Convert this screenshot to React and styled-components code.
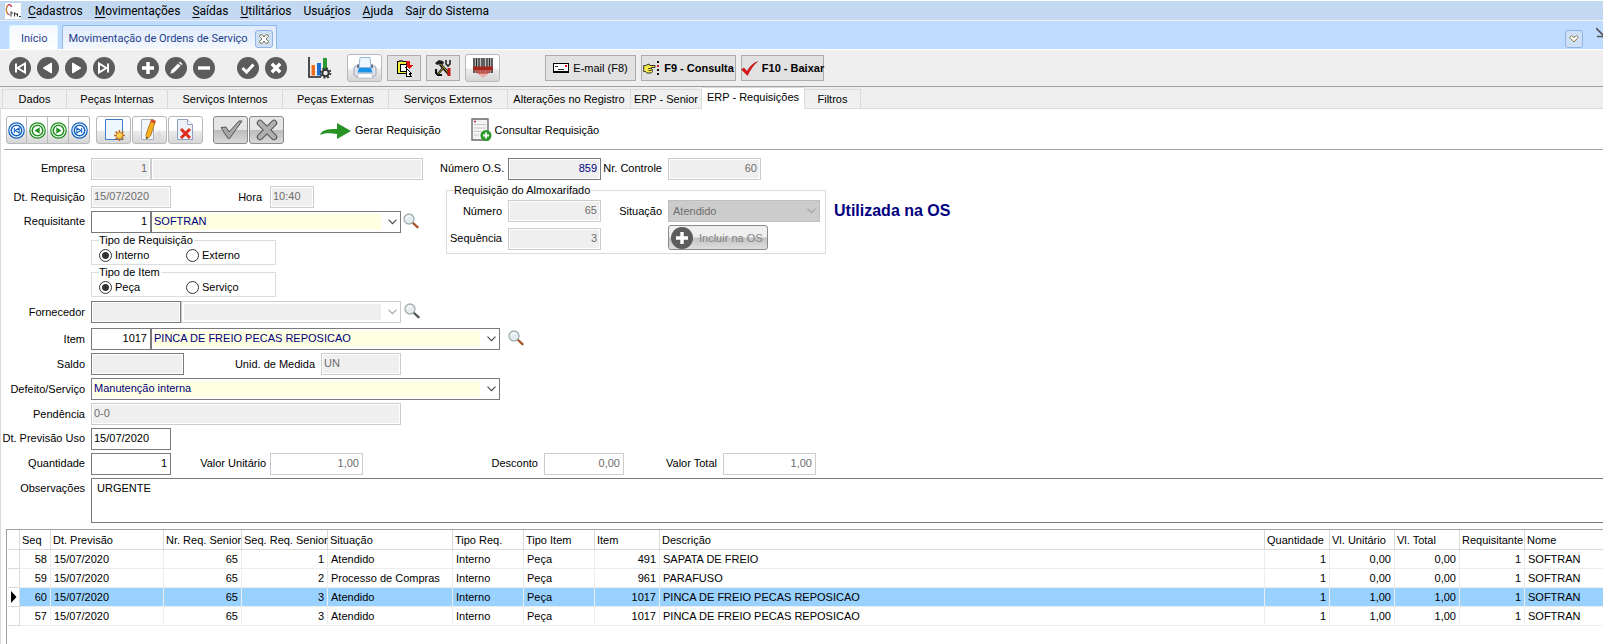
import React, { useState } from 'react';
import styled, { createGlobalStyle, css } from 'styled-components';

const GlobalStyle = createGlobalStyle`
    *, *::before, *::after { box-sizing: border-box; }
    html, body, #root { height: 100%; }
    body {
        margin: 0;
        background: #fff;
        color: #000;
        font: 11px/12px "Liberation Sans", Arial, sans-serif;
    }
    button, input, select, textarea { font: inherit; margin: 0; border-radius: 0; }
    svg { display: block; flex: none; }
`

/* ---------- layout ---------- */
const Page = styled.div`
    min-height: 100%;
    display: flex;
    flex-direction: column;
    overflow: hidden;
`
const MenuBar = styled.nav`
    height: 21px;
    display: flex;
    align-items: center;
    gap: 12px;
    padding-left: 5px;
    background: #c3d9f1;
    border-top: 1px solid #fff;
    border-bottom: 1px solid #efefef;
    font: 12px/18px Roboto, "Open Sans", sans-serif;
`
const MenuLink = styled.a`
    color: #000;
    text-decoration: none;
    white-space: nowrap;
    &:first-of-type { margin-left: -5px; }
    u { text-underline-offset: 2px; }
`
const WindowTabs = styled.div`
    height: 29px;
    display: flex;
    align-items: flex-end;
    gap: 4px;
    padding-left: 9px;
    background: #bfdbff;
    border-bottom: 1px solid #fff;
    font: 11px/16px Roboto, "Noto Sans", sans-serif;
`
const WindowTab = styled.button`
    height: 24px;
    display: flex;
    align-items: center;
    gap: 7px;
    padding: ${props => props.$closable ? '2px 3px 0 6px' : '2px 9px 0 11px'};
    border: 1px solid ${props => props.$closable ? '#8db9ee' : '#d5f7ff'};
    border-bottom: 0;
    border-radius: 2px 2px 0 0;
    background: ${props => props.$closable ? 'linear-gradient(#dfeafb, #f4f8fe)' : 'linear-gradient(#f4f9ff, #fff)'};
    color: #1f3f8c;
    white-space: nowrap;
`
const SmallBox = styled.span`
    width: 18px;
    height: 18px;
    display: grid;
    place-items: center;
    border: 1px solid #8fb4e3;
    border-radius: 3px;
    background: #cfe0f6;
`
const ChevronButton = styled.button`
    width: 18px;
    height: 18px;
    display: grid;
    place-items: center;
    padding: 0;
    margin: 0 9px 1px auto;
    border: 1px solid #8fb4e3;
    border-radius: 3px;
    background: #cfe0f6;
`
const Corner = styled.span`
    width: 7px;
    height: 22px;
    overflow: hidden;
`
const Toolbar = styled.div`
    height: 37px;
    display: flex;
    align-items: center;
    padding: 0 9px;
    background: #efefef;
    border-bottom: 1px solid #a0a0a0;
`
const Group = styled.div`
    display: flex;
    align-items: center;
    gap: ${props => props.$gap || 0}px;
    margin-left: ${props => props.$left || 0}px;
`
const RoundButton = styled.button`
    width: 22px;
    height: 22px;
    padding: 0;
    border: 0;
    background: none;
`
const GlossButton = styled.button`
    width: ${props => props.$wide ? 35 : 21}px;
    height: 28px;
    display: grid;
    place-items: center;
    padding: 0;
    border: 1px solid ${props => props.$dark ? '#8a8a8a' : '#b9b9b9'};
    border-radius: 3px;
    background: ${props => props.$dark
        ? 'linear-gradient(#e6e6e6 0 48%, #bdbdbd 52%, #d8d8d8)'
        : 'linear-gradient(#fff 0 50%, #ececec 55%, #d6d6d6)'};
`
const NavStrip = styled.div`
    display: flex;
    ${GlossButton} { border-radius: 0; }
    ${GlossButton} + ${GlossButton} { border-left: 0; }
    ${GlossButton}:first-child { border-radius: 3px 0 0 3px; }
    ${GlossButton}:last-child { border-radius: 0 3px 3px 0; }
`
const FlatButton = styled.button`
    height: 26px;
    display: flex;
    align-items: center;
    justify-content: center;
    gap: 4px;
    width: ${props => props.$width}px;
    padding: 0;
    border: 1px solid #adadad;
    background: #e1e1e1;
    color: #000;
    white-space: nowrap;
    ${props => props.$bold && css`font-weight: bold;`}
`
const TabStrip = styled.div`
    height: 22px;
    display: flex;
    align-items: flex-end;
    padding-left: 2px;
    background: #efefef;
    box-shadow: inset 0 -1px #dadada;
`
const PageTab = styled.button`
    width: ${props => props.$width}px;
    height: 20px;
    padding: 0;
    border: 1px solid #dadada;
    border-left-width: ${props => props.$first ? 1 : 0}px;
    background: #f0f0f0;
    color: #000;
    white-space: nowrap;
    ${props => props.$active && css`
        height: 22px;
        padding-bottom: 2px;
        border-bottom-color: #fff;
        background: #fff;
    `}
`
const Content = styled.main`
    flex: 1;
    display: flex;
    flex-direction: column;
    border-left: 1px solid #dadada;
`
const RecordBar = styled.div`
    height: 41px;
    display: flex;
    align-items: center;
    margin-left: 3px;
    padding: 2px 2px 0;
    border-bottom: 1px solid #a0a0a0;
`
const LinkButton = styled.button`
    display: flex;
    align-items: center;
    gap: 3px;
    margin-left: ${props => props.$left}px;
    padding: 0;
    border: 0;
    background: none;
    color: #000;
    white-space: nowrap;
`

/* ---------- form ---------- */
const Form = styled.form`
    padding-top: 8px;
`
const Columns = styled.div`
    display: flex;
    align-items: flex-start;
`
const LeftColumn = styled.div`
    width: 422px;
    flex: none;
`
const RightColumn = styled.div`
    flex: none;
    margin-left: 17px;
`
const Row = styled.div`
    display: flex;
    align-items: center;
    margin-top: ${props => props.$top || 0}px;
`
const Label = styled.label`
    flex: none;
    width: ${props => props.$width || 84}px;
    margin-right: ${props => props.$right || 6}px;
    text-align: right;
    white-space: nowrap;
    ${props => props.$raise && css`align-self: flex-start; padding-top: 4px;`}
`
const fieldFrame = css`
    height: 22px;
    border: 1px solid ${props => props.$soft ? '#cccccc' : '#7a7a7a'};
    color: ${props => props.$soft ? '#6d6d6d' : props.$navy ? '#000080' : '#000'};
    opacity: 1;
    outline: 0;
`
const Field = styled.input`
    ${fieldFrame}
    flex: none;
    width: ${props => props.$width}px;
    padding: 0 ${props => props.$right ? 3 : 2}px 2px 2px;
    text-align: ${props => props.$right ? 'right' : 'left'};
    background: ${props => props.$white ? '#fff' : '#efefef'};
    box-shadow: inset 0 0 0 1px #fff;
`
const ComboBox = styled.div`
    flex: none;
    display: grid;
    align-items: center;
    width: ${props => props.$width}px;
    > * { grid-area: 1 / 1; }
    svg {
        justify-self: end;
        margin-right: 4px;
        pointer-events: none;
    }
`
const Select = styled.select`
    ${fieldFrame}
    width: 100%;
    appearance: none;
    padding: 0 20px 2px 2px;
    background: ${props => props.$solid
        ? '#cccccc'
        : css`linear-gradient(${props.$soft ? '#efefef' : '#ffffe1'} 0 100%) 2px 2px / calc(100% - 21px) 16px no-repeat #fff`};
    ${props => props.$solid && css`border-color: #bfbfbf; padding: 0 20px 0 4px;`}
`
const LookupButton = styled.button`
    padding: 0 0 2px;
    margin-left: ${props => props.$left}px;
    border: 0;
    background: none;
`
const RadioBox = styled.fieldset`
    display: flex;
    width: 185px;
    height: 31px;
    min-width: 0;
    margin: 1px 0 0 90px;
    padding: 0 0 0 7px;
    border: 1px solid #dcdcdc;
`
const Legend = styled.legend`
    padding: 0 1px 0 0;
    line-height: 12px;
`
const RadioLabel = styled.label`
    width: 87px;
    height: 18px;
    display: flex;
    align-items: center;
    gap: 3px;
`
const Radio = styled.input`
    appearance: none;
    flex: none;
    width: 13px;
    height: 13px;
    border: 1px solid #333;
    border-radius: 50%;
    background: #fff;
    &:checked { background: radial-gradient(circle, #333 0 3px, #fff 4px); }
`
const StockBox = styled.fieldset`
    display: grid;
    grid-template-columns: 55px 93px 55px 152px;
    align-items: end;
    gap: 3px 6px;
    width: 380px;
    margin: 4px 0 0 6px;
    padding: 4px 0 3px;
    border: 1px solid #dcdcdc;
    legend { margin-left: 7px; }
    ${Label} { width: auto; margin: 0; align-self: center; }
`
const IncludeButton = styled.button`
    width: 100px;
    height: 25px;
    display: flex;
    align-items: center;
    gap: 6px;
    padding: 0 2px;
    border: 1px solid #8a8a8a;
    border-radius: 3px;
    background: linear-gradient(#efefef 0 48%, #c2c2c2 52%, #dedede);
    color: #838383;
    white-space: nowrap;
`
const Status = styled.strong`
    margin-left: 8px;
    padding-top: 44px;
    color: #000080;
    font-size: 16px;
    line-height: 18px;
    white-space: nowrap;
`
const Notes = styled.textarea`
    flex: 1;
    display: block;
    height: 45px;
    padding: 3px 5px;
    border: 1px solid #7a7a7a;
    border-right: 0;
    resize: none;
    outline: 0;
`

/* ---------- grid ---------- */
const GridFrame = styled.div`
    flex: 1;
    margin: 6px 0 0 5px;
    padding-left: 1px;
    border: solid #a0a0a0;
    border-width: 1px 0 0 1px;
`
const Grid = styled.table`
    width: 100%;
    table-layout: fixed;
    border-collapse: separate;
    border-spacing: 0;
`
const HeadCell = styled.th`
    height: 20px;
    padding: 0 0 0 2px;
    border-right: 1px solid #dadada;
    border-bottom: 1px solid #dadada;
    font-weight: normal;
    text-align: left;
    white-space: nowrap;
    &:last-child { border-right: 0; }
`
const Cell = styled.td`
    height: 19px;
    padding: 0 3px;
    border-right: 1px solid #ededed;
    border-bottom: 1px solid #ededed;
    text-align: ${props => props.$right ? 'right' : 'left'};
    white-space: nowrap;
    ${props => props.$selected && css`background: #99d1ff;`}
    &:last-child { border-right: 0; }
`
const Marker = styled.td`
    padding: 0 0 0 2px;
    border-right: 1px solid #dadada;
    border-bottom: 1px solid #dadada;
`

/* ---------- icons ---------- */
const shapes = {
    first: <path d="M7 6.5v9M16 6.5v9L8.6 11z" strokeWidth="2" fill="none" />,
    prev: <path d="M14.5 6v10L6.2 11z" strokeWidth="1" />,
    next: <path d="M7.5 6v10L15.8 11z" strokeWidth="1" />,
    last: <path d="M15 6.5v9M6 6.5v9L13.4 11z" strokeWidth="2" fill="none" />,
    plus: <path d="M11 5v12M5 11h12" strokeWidth="3.4" />,
    edit: <path d="M5.6 16.4l.9-3.1 6.5-6.6 2.4 2.4-6.6 6.5zM14 5.7l1-1 2.4 2.4-1 1z" strokeWidth=".3" />,
    minus: <path d="M5 11h12" strokeWidth="3.4" />,
    check: <path d="M5.5 11l4 4 7-7.6" strokeWidth="3" fill="none" />,
    cross: <path d="M6.8 6.8l8.4 8.4M15.2 6.8l-8.4 8.4" strokeWidth="3.4" />,
}

const DiscIcon = ({ name }) => (
    <svg width="22" height="22" viewBox="0 0 22 22">
        <circle cx="11" cy="11" r="11" fill="#5c5c5c" />
        <g fill="#fff" stroke="#fff">{shapes[name]}</g>
    </svg>
)

const OrbIcon = ({ name, color }) => (
    <svg width="17" height="17" viewBox="0 0 22 22">
        <circle cx="11" cy="11" r="10" fill="#fff" stroke={color} strokeWidth="1.6" />
        <circle cx="11" cy="11" r="6.800" fill="#fff" stroke={color} strokeWidth="2" />
        <g transform="translate(3.300 3.300) scale(.7)" fill={color} stroke={color}>{shapes[name]}</g>
    </svg>
)

const LogoIcon = () => (
    <svg width="16" height="16" viewBox="0 0 16 16">
        <path d="M0 0h16v16H0z" fill="#fff" />
        <path d="M6.500 4C5.800 1 3.200.9 2 3.500.500 7 1.500 11 4.500 12" fill="none" stroke="#b01c50" strokeWidth="1.200" />
        <path d="M3 1.800C.6 5 .6 9.500 3.300 12" fill="none" stroke="#d8c420" strokeWidth=".8" />
        <path d="M6 8.500v5M6 9l2 1.500M9.500 13.500V9.500l1.500 2 1.500-1v3M14 13.500h2" fill="none" stroke="#333" strokeWidth="1" />
    </svg>
)

const CloseIcon = () => (
    <svg width="12" height="12" viewBox="0 0 12 12">
        <path d="M2 2l2-.5 2 2.500 2-2.500 2 .5.500 1.500L8 6l2.500 2.500L10 10l-2 .5L6 8l-2 2.500-2-.5-.5-1.500L4 6 1.500 3.500z" fill="#fff" stroke="#6d6b4b" strokeWidth=".9" />
    </svg>
)

const MoreIcon = () => (
    <svg width="10" height="8" viewBox="0 0 10 8">
        <path d="M.8 2.300L2.500.700 5 2.500 7.500.700l1.700 1.600L5 7z" fill="#fff" stroke="#7d6a2f" strokeWidth=".9" />
    </svg>
)

const CornerIcon = () => (
    <svg width="14" height="14" viewBox="0 0 14 14">
        <path d="M0 1l8 8M8 2v7.500H1" fill="none" stroke="#555" strokeWidth="1.600" />
    </svg>
)

const ChartIcon = () => (
    <svg width="24" height="22" viewBox="0 0 24 22">
        <path d="M1 0v20h12" fill="none" stroke="#222" strokeWidth="1.600" />
        <path d="M3.500 8h3.500v10.500H3.500z" fill="#f26a1b" />
        <path d="M9 6h4v12.500H9z" fill="#1d6fd0" />
        <path d="M15 1h4v12h-4z" fill="#2d9a35" />
        <circle cx="17.500" cy="16" r="3.200" fill="#efefef" stroke="#333" strokeWidth="2" />
        <circle cx="17.500" cy="16" r="4.900" fill="none" stroke="#333" strokeWidth="1.800" strokeDasharray="1.900 1.950" />
    </svg>
)

const PrinterIcon = () => (
    <svg width="24" height="24" viewBox="0 0 24 24">
        <path d="M1 11l4-2h14l4 2v8l-3 2H4l-3-2z" fill="#dfe2ea" stroke="#8c93a8" strokeWidth=".8" />
        <path d="M7 1.500h10l1 10H6z" fill="#eef7ff" stroke="#7fa5cf" strokeWidth=".8" />
        <path d="M5 12V8.500M19 12V8.500" stroke="#4a5a78" strokeWidth="1.500" />
        <path d="M6 12h12l1.500 4.500h-15z" fill="#1992e8" />
        <path d="M5.500 17.500h13L20 22H4z" fill="#fff" stroke="#9aa3b5" strokeWidth=".6" />
    </svg>
)

const ExitIcon = () => (
    <svg width="17" height="18" viewBox="0 0 17 18" shapeRendering="crispEdges">
        <path d="M1 2h9v12H1z" fill="#f4ef3c" stroke="#000" />
        <path d="M4 5h6v7H4z" fill="#fff" stroke="#000" />
        <path d="M3 1h4v2H3z" fill="#555" />
        <path d="M10 2h4v4h3l-4 4-4-4h2V4h-1z" fill="#e81010" />
        <path d="M9 8l6 6h-2l2 3h-5V8z" fill="#fff" stroke="#000" />
    </svg>
)

const ToolsIcon = () => (
    <svg width="17" height="18" viewBox="0 0 17 18">
        <path d="M0 4l4-3 4 1 1 2-2 2-2-1-3 1z" fill="#222" />
        <path d="M5 5l9 10" stroke="#111" strokeWidth="3" />
        <path d="M5.500 5l8 9" stroke="#c9b82e" strokeWidth="1" />
        <path d="M11 1v4l2 2 2-2V1" fill="none" stroke="#222" strokeWidth="1.600" />
        <path d="M14 9v8" stroke="#c21919" strokeWidth="3" />
        <path d="M8 9l-5 6M1 10v4l2 2h4" stroke="#111" strokeWidth="2.200" fill="none" />
        <path d="M8 9l-5 6" stroke="#d7c536" strokeWidth=".8" />
    </svg>
)

const ScannerIcon = () => (
    <svg width="22" height="22" viewBox="0 0 22 22">
        <path d="M3 13h16l-4 5-4 3-4-3z" fill="#e8b0aa" />
        <path d="M1 1h20v15H1z" fill="#999" opacity=".6" />
        <path d="M2 1v15M4.500 1v15M7 1v15M10 1v15M12 1v15M15 1v15M17.500 1v15M20 1v15" stroke="#2a2a2a" strokeWidth="1.300" />
        <path d="M1 9.500h20V13H1z" fill="#a3251c" />
        <path d="M2 13h18l-4 4H6z" fill="#cf5a50" opacity=".8" />
    </svg>
)

const MailIcon = () => (
    <svg width="16" height="10" viewBox="0 0 16 10" shapeRendering="crispEdges">
        <path d="M.5.500h15v8H.500z" fill="#fff" stroke="#000" />
        <path d="M0 9.500h16" stroke="#000" />
        <path d="M12 2h2v2h-2z" fill="#e81010" />
        <path d="M2 3.500h3M5 6.500h6" stroke="#333" />
    </svg>
)

const HandIcon = () => (
    <svg width="17" height="16" viewBox="0 0 17 16">
        <path d="M.7 5.500h2L6 4l1 1.500h5v2H8.500v1.500l1 .5-.5 1.500.5.500-.7 1L8 13H4l-1.500-1.500H.7z" fill="#f4ea4a" stroke="#222" strokeWidth=".9" />
        <path d="M5 8.500h3.500M5.500 10.500h3" stroke="#222" strokeWidth=".8" />
        <path d="M15 1v15" stroke="#111" strokeWidth="2" strokeDasharray="2 2" />
        <path d="M15 5v2" stroke="#c21919" strokeWidth="2" />
    </svg>
)

const RedCheckIcon = () => (
    <svg width="17" height="15" viewBox="0 0 17 15">
        <path d="M.5 8.500L3 7l3 3.500C8.500 6 11.500 2.500 16.500.500 12 4.500 9 9 6.500 14.500z" fill="#e01414" stroke="#a00" strokeWidth=".5" />
    </svg>
)

const Sheet = ({ children }) => (
    <svg width="24" height="24" viewBox="0 0 24 24">{children}</svg>
)

const NewIcon = () => (
    <Sheet>
        <path d="M3.500 1.500h17v20h-17z" fill="#eef6ff" stroke="#3d7cc4" />
        <path d="M17.500 12v11M12 17.500h11M13.600 13.600l7.800 7.800M21.400 13.600l-7.800 7.800" stroke="#b96a12" strokeWidth="1.600" />
        <circle cx="17.500" cy="17.500" r="3" fill="#ffd257" stroke="#d98d20" />
    </Sheet>
)

const EditSheetIcon = () => (
    <Sheet>
        <path d="M15 21l6-9 3 7-4 3z" fill="#dcdcdc" />
        <path d="M3.500 1.500h12v20h-12z" fill="#f2f5fa" stroke="#a9b3c4" />
        <path d="M13.500 1.500l4 1.500-5 15-4 3-.5-4.500z" fill="#f6b21c" stroke="#a8690f" strokeWidth=".8" />
        <path d="M13.500 1.500l4 1.500-.8 2.500-4-1.500z" fill="#d2493a" />
        <path d="M8.500 21l-.2-2 1.700.8z" fill="#222" />
    </Sheet>
)

const DeleteIcon = () => (
    <Sheet>
        <path d="M3.500 1.500h10l5 5v15h-15z" fill="#eef1f7" stroke="#8ea0bd" />
        <path d="M13.500 1.500v5h5" fill="#fff" stroke="#8ea0bd" />
        <path d="M7 11l9 9M16 11l-9 9" stroke="#e02a1c" strokeWidth="3" />
    </Sheet>
)

const GrayCheckIcon = () => (
    <Sheet>
        <path d="M2 9.500l5-.5 3 5L20 3h3L10.500 20.500H9z" fill="#a8a8a8" stroke="#555" />
    </Sheet>
)

const GrayCrossIcon = () => (
    <Sheet>
        <path d="M5 5l14 14M19 5L5 19" stroke="#555" strokeWidth="6.500" strokeLinecap="round" />
        <path d="M5 5l14 14M19 5L5 19" stroke="#b0b0b0" strokeWidth="4.500" strokeLinecap="round" />
    </Sheet>
)

const ArrowIcon = () => (
    <svg width="32" height="18" viewBox="0 0 32 18">
        <path d="M0 14C2 9 6 8 17 8V2l14 8-14 8v-5C9 12 4 12 0 14z" fill="#2a9325" />
    </svg>
)

const RequestIcon = () => (
    <svg width="21" height="24" viewBox="0 0 21 24">
        <path d="M1 1h16v21H1z" fill="#f3f3f3" stroke="#6b6b6b" strokeWidth="1.400" />
        <path d="M3 3.500h2" stroke="#b03050" strokeWidth="1.500" />
        <path d="M3 6.500h12M3 10h12M3 13.500h7M3 17h5" stroke="#c8c8c8" />
        <circle cx="15" cy="17.500" r="5.500" fill="#2f9a2b" />
        <path d="M15 14.500v6M12 17.500h6" stroke="#fff" strokeWidth="1.800" />
    </svg>
)

const LensIcon = ({ muted }) => (
    <svg width="16" height="16" viewBox="0 0 16 16">
        <path d="M9.500 9.500l5 4.700" stroke={muted ? '#555' : '#a8562a'} strokeWidth="2.400" strokeLinecap="round" />
        <circle cx="6" cy="6" r="5" fill={muted ? '#ebebeb' : '#e3ecef'} stroke="#a3afb3" strokeWidth="1.300" />
        <path d="M3 5.500C3.500 3.500 5.500 2.700 7.500 3.500" fill="none" stroke="#fff" strokeWidth="1.200" />
    </svg>
)

const DownIcon = ({ muted }) => (
    <svg width="9" height="6" viewBox="0 0 9 6">
        <path d="M.5.700l4 4 4-4" fill="none" stroke={muted ? '#a3a3a3' : '#444'} strokeWidth="1.100" />
    </svg>
)

const PointerIcon = () => (
    <svg width="7" height="12" viewBox="0 0 7 12">
        <path d="M1 0l5.500 6L1 12z" fill="#000" />
    </svg>
)

/* ---------- data ---------- */
const menu = [
    ['', 'C', 'adastros'],
    ['', 'M', 'ovimentações'],
    ['', 'S', 'aídas'],
    ['', 'U', 'tilitários'],
    ['Usuá', 'r', 'ios'],
    ['', 'A', 'juda'],
    ['Sa', 'i', 'r do Sistema'],
]

const pageTabs = [
    ['Dados', 65],
    ['Peças Internas', 101],
    ['Serviços Internos', 115],
    ['Peças Externas', 106],
    ['Serviços Externos', 119],
    ['Alterações no Registro', 123],
    ['ERP - Senior', 71],
    ['ERP - Requisições', 103],
    ['Filtros', 56],
]

const columns = [
    { title: 'Seq', width: 31, right: true },
    { title: 'Dt. Previsão', width: 113 },
    { title: 'Nr. Req. Senior', width: 78, right: true },
    { title: 'Seq. Req. Senior', width: 86, right: true },
    { title: 'Situação', width: 125 },
    { title: 'Tipo Req.', width: 71 },
    { title: 'Tipo Item', width: 71 },
    { title: 'Item', width: 65, right: true },
    { title: 'Descrição' },
    { title: 'Quantidade', width: 65, right: true },
    { title: 'Vl. Unitário', width: 65, right: true },
    { title: 'Vl. Total', width: 65, right: true },
    { title: 'Requisitante', width: 65, right: true },
    { title: 'Nome', width: 78 },
]

const rows = [
    ['58', '15/07/2020', '65', '1', 'Atendido', 'Interno', 'Peça', '491', 'SAPATA DE FREIO', '1', '0,00', '0,00', '1', 'SOFTRAN'],
    ['59', '15/07/2020', '65', '2', 'Processo de Compras', 'Interno', 'Peça', '961', 'PARAFUSO', '1', '0,00', '0,00', '1', 'SOFTRAN'],
    ['60', '15/07/2020', '65', '3', 'Atendido', 'Interno', 'Peça', '1017', 'PINCA DE FREIO PECAS REPOSICAO', '1', '1,00', '1,00', '1', 'SOFTRAN'],
    ['57', '15/07/2020', '65', '3', 'Atendido', 'Interno', 'Peça', '1017', 'PINCA DE FREIO PECAS REPOSICAO', '1', '1,00', '1,00', '1', 'SOFTRAN'],
]

/* ---------- parts ---------- */
function Combo({ id, label, width, value, soft, solid }) {
    return (
        <ComboBox $width={width}>
            <Select id={id} aria-label={label} $soft={soft} $solid={solid} $navy disabled={soft}>
                <option>{value}</option>
            </Select>
            <DownIcon muted={soft} />
        </ComboBox>
    )
}

function RadioGroup({ name, title, options }) {
    const [value, setValue] = useState(options[0])
    return (
        <RadioBox>
            <Legend>{title}</Legend>
            {options.map(option => (
                <RadioLabel key={option}>
                    <Radio type="radio" name={name} checked={value === option} onChange={() => setValue(option)} />
                    {option}
                </RadioLabel>
            ))}
        </RadioBox>
    )
}

function RequestForm() {
    return (
        <Form onSubmit={e => e.preventDefault()}>
            <Columns>
                <LeftColumn>
                    <Row>
                        <Label htmlFor="empresa" $raise>Empresa</Label>
                        <Field id="empresa" $width={60} $soft $right disabled defaultValue="1" />
                        <Field aria-label="Nome da empresa" $width={272} $soft disabled />
                    </Row>
                    <Row $top={6}>
                        <Label htmlFor="data">Dt. Requisição</Label>
                        <Field id="data" $width={80} $soft disabled defaultValue="15/07/2020" />
                        <Label htmlFor="hora" $width={91} $right={8}>Hora</Label>
                        <Field id="hora" $width={44} $soft disabled defaultValue="10:40" />
                    </Row>
                    <Row $top={3}>
                        <Label htmlFor="requisitante" $raise>Requisitante</Label>
                        <Field id="requisitante" $width={60} $white $right defaultValue="1" />
                        <Combo label="Nome do requisitante" width={250} value="SOFTRAN" />
                        <LookupButton type="button" aria-label="Pesquisar requisitante" $left={2}><LensIcon /></LookupButton>
                    </Row>
                    <RadioGroup name="tipoRequisicao" title="Tipo de Requisição" options={['Interno', 'Externo']} />
                    <RadioGroup name="tipoItem" title="Tipo de Item" options={['Peça', 'Serviço']} />
                </LeftColumn>
                <RightColumn>
                    <Row>
                        <Label htmlFor="os" $width={62} $raise>Número O.S.</Label>
                        <Field id="os" $width={93} $navy $right readOnly defaultValue="859" />
                        <Label htmlFor="controle" $width={61} $raise>Nr. Controle</Label>
                        <Field id="controle" $width={93} $soft $right disabled defaultValue="60" />
                    </Row>
                    <StockBox>
                        <Legend>Requisição do Almoxarifado</Legend>
                        <Label htmlFor="numero">Número</Label>
                        <Field id="numero" $width={93} $soft $right disabled defaultValue="65" />
                        <Label htmlFor="situacao">Situação</Label>
                        <Combo id="situacao" width={152} value="Atendido" soft solid />
                        <Label htmlFor="sequencia">Sequência</Label>
                        <Field id="sequencia" $width={93} $soft $right disabled defaultValue="3" />
                        <span />
                        <IncludeButton type="button" disabled><DiscIcon name="plus" />Incluir na OS</IncludeButton>
                    </StockBox>
                </RightColumn>
                <Status>Utilizada na OS</Status>
            </Columns>
            <Row $top={4}>
                <Label htmlFor="fornecedor">Fornecedor</Label>
                <Field id="fornecedor" $width={90} readOnly />
                <Combo label="Nome do fornecedor" width={220} value="" soft />
                <LookupButton type="button" aria-label="Pesquisar fornecedor" $left={3}><LensIcon muted /></LookupButton>
            </Row>
            <Row $top={5}>
                <Label htmlFor="item">Item</Label>
                <Field id="item" $width={60} $white $right defaultValue="1017" />
                <Combo label="Descrição do item" width={349} value="PINCA DE FREIO PECAS REPOSICAO" />
                <LookupButton type="button" aria-label="Pesquisar item" $left={8}><LensIcon /></LookupButton>
            </Row>
            <Row $top={3}>
                <Label htmlFor="saldo">Saldo</Label>
                <Field id="saldo" $width={93} readOnly />
                <Label htmlFor="unidade" $width={131}>Unid. de Medida</Label>
                <Field id="unidade" $width={80} $soft disabled defaultValue="UN" />
            </Row>
            <Row $top={3}>
                <Label htmlFor="defeito">Defeito/Serviço</Label>
                <Combo id="defeito" width={409} value="Manutenção interna" />
            </Row>
            <Row $top={3}>
                <Label htmlFor="pendencia">Pendência</Label>
                <Field id="pendencia" $width={310} $soft disabled defaultValue="0-0" />
            </Row>
            <Row $top={3}>
                <Label htmlFor="previsao" $raise>Dt. Previsão Uso</Label>
                <Field id="previsao" $width={80} $white defaultValue="15/07/2020" />
            </Row>
            <Row $top={3}>
                <Label htmlFor="quantidade" $raise>Quantidade</Label>
                <Field id="quantidade" $width={80} $white $right defaultValue="1" />
                <Label htmlFor="unitario" $width={95} $right={4} $raise>Valor Unitário</Label>
                <Field id="unitario" $width={93} $white $soft $right disabled defaultValue="1,00" />
                <Label htmlFor="desconto" $width={175} $raise>Desconto</Label>
                <Field id="desconto" $width={80} $white $soft $right disabled defaultValue="0,00" />
                <Label htmlFor="total" $width={93} $raise>Valor Total</Label>
                <Field id="total" $width={93} $white $soft $right disabled defaultValue="1,00" />
            </Row>
            <Row $top={3}>
                <Label htmlFor="observacoes" $raise>Observações</Label>
                <Notes id="observacoes" defaultValue="URGENTE" />
            </Row>
        </Form>
    )
}

function RequestGrid() {
    const [selected, setSelected] = useState(2)
    return (
        <GridFrame>
            <Grid>
                <colgroup>
                    <col width="12" />
                    {columns.map(c => <col key={c.title} width={c.width} />)}
                </colgroup>
                <thead>
                    <tr>
                        <HeadCell />
                        {columns.map(c => <HeadCell key={c.title} scope="col">{c.title}</HeadCell>)}
                    </tr>
                </thead>
                <tbody>
                    {rows.map((row, r) => (
                        <tr key={row[0]} onClick={() => setSelected(r)}>
                            <Marker>{r === selected && <PointerIcon />}</Marker>
                            {row.map((value, c) => (
                                <Cell key={c} $right={columns[c].right} $selected={r === selected}>{value}</Cell>
                            ))}
                        </tr>
                    ))}
                </tbody>
            </Grid>
        </GridFrame>
    )
}

const Disc = ({ name, label }) => (
    <RoundButton type="button" aria-label={label}><DiscIcon name={name} /></RoundButton>
)

function App() {
    const [tab, setTab] = useState('ERP - Requisições')
    return (
        <Page>
            <GlobalStyle />
            <MenuBar>
                <LogoIcon />
                {menu.map(([before, key, after]) => (
                    <MenuLink href="#" key={after}>{before}<u>{key}</u>{after}</MenuLink>
                ))}
            </MenuBar>
            <WindowTabs>
                <WindowTab type="button">Início</WindowTab>
                <WindowTab type="button" $closable>
                    Movimentação de Ordens de Serviço
                    <SmallBox><CloseIcon /></SmallBox>
                </WindowTab>
                <ChevronButton type="button" aria-label="Janelas"><MoreIcon /></ChevronButton>
                <Corner><CornerIcon /></Corner>
            </WindowTabs>
            <Toolbar>
                <Group $gap={6}>
                    <Disc name="first" label="Primeiro" />
                    <Disc name="prev" label="Anterior" />
                    <Disc name="next" label="Próximo" />
                    <Disc name="last" label="Último" />
                </Group>
                <Group $gap={6} $left={22}>
                    <Disc name="plus" label="Incluir" />
                    <Disc name="edit" label="Alterar" />
                    <Disc name="minus" label="Excluir" />
                </Group>
                <Group $gap={6} $left={22}>
                    <Disc name="check" label="Confirmar" />
                    <Disc name="cross" label="Cancelar" />
                </Group>
                <Group $left={21}><ChartIcon /></Group>
                <Group $gap={5} $left={15}>
                    <GlossButton type="button" aria-label="Imprimir" $wide><PrinterIcon /></GlossButton>
                    <FlatButton type="button" aria-label="Sair" $width={34}><ExitIcon /></FlatButton>
                    <FlatButton type="button" aria-label="Ferramentas" $width={34}><ToolsIcon /></FlatButton>
                    <GlossButton type="button" aria-label="Código de barras" $wide><ScannerIcon /></GlossButton>
                </Group>
                <Group $gap={5} $left={45}>
                    <FlatButton type="button" $width={91}><MailIcon />E-mail (F8)</FlatButton>
                    <FlatButton type="button" $width={95} $bold><HandIcon />F9 - Consulta</FlatButton>
                    <FlatButton type="button" $width={83} $bold><RedCheckIcon />F10 - Baixar</FlatButton>
                </Group>
            </Toolbar>
            <TabStrip>
                {pageTabs.map(([title, width], i) => (
                    <PageTab key={title} type="button" $width={width} $first={i === 0} $active={tab === title} onClick={() => setTab(title)}>
                        {title}
                    </PageTab>
                ))}
            </TabStrip>
            <Content>
                <RecordBar>
                    <NavStrip>
                        <GlossButton type="button" aria-label="Primeiro registro"><OrbIcon name="first" color="#1565c4" /></GlossButton>
                        <GlossButton type="button" aria-label="Registro anterior"><OrbIcon name="prev" color="#1f8f1f" /></GlossButton>
                        <GlossButton type="button" aria-label="Próximo registro"><OrbIcon name="next" color="#1f8f1f" /></GlossButton>
                        <GlossButton type="button" aria-label="Último registro"><OrbIcon name="last" color="#1565c4" /></GlossButton>
                    </NavStrip>
                    <Group $gap={1} $left={6}>
                        <GlossButton type="button" aria-label="Novo" $wide><NewIcon /></GlossButton>
                        <GlossButton type="button" aria-label="Editar" $wide><EditSheetIcon /></GlossButton>
                        <GlossButton type="button" aria-label="Apagar" $wide><DeleteIcon /></GlossButton>
                    </Group>
                    <Group $gap={1} $left={10}>
                        <GlossButton type="button" aria-label="Gravar" $wide $dark><GrayCheckIcon /></GlossButton>
                        <GlossButton type="button" aria-label="Desfazer" $wide $dark><GrayCrossIcon /></GlossButton>
                    </Group>
                    <LinkButton type="button" $left={36}><ArrowIcon />Gerar Requisição</LinkButton>
                    <LinkButton type="button" $left={30}><RequestIcon />Consultar Requisição</LinkButton>
                </RecordBar>
                <RequestForm />
                <RequestGrid />
            </Content>
        </Page>
    )
}

export default App;
